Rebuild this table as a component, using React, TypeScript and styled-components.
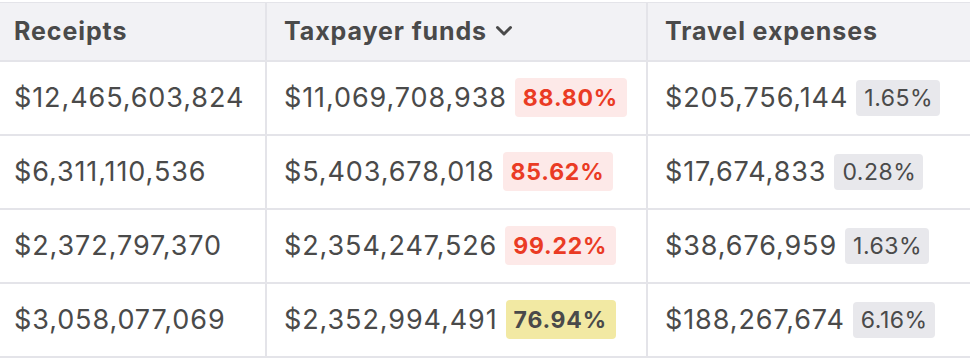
import React from "react";
import styled, { createGlobalStyle } from "styled-components";

const GlobalStyle = createGlobalStyle`
  html, body {
    margin: 0;
    padding: 0;
    background: #fff;
    overflow: hidden;
  }
  body {
    font-family: Inter, Lato, "Liberation Sans", sans-serif;
    color: #4a4a4a;
  }
`;

type Tone = "red" | "yellow" | "gray";

interface Row {
  receipts: string;
  funds: string;
  fundsPct: string;
  fundsTone: Tone;
  travel: string;
  travelPct: string;
}

const rows: Row[] = [
  {
    receipts: "$12,465,603,824",
    funds: "$11,069,708,938",
    fundsPct: "88.80%",
    fundsTone: "red",
    travel: "$205,756,144",
    travelPct: "1.65%",
  },
  {
    receipts: "$6,311,110,536",
    funds: "$5,403,678,018",
    fundsPct: "85.62%",
    fundsTone: "red",
    travel: "$17,674,833",
    travelPct: "0.28%",
  },
  {
    receipts: "$2,372,797,370",
    funds: "$2,354,247,526",
    fundsPct: "99.22%",
    fundsTone: "red",
    travel: "$38,676,959",
    travelPct: "1.63%",
  },
  {
    receipts: "$3,058,077,069",
    funds: "$2,352,994,491",
    fundsPct: "76.94%",
    fundsTone: "yellow",
    travel: "$188,267,674",
    travelPct: "6.16%",
  },
];

const Page = styled.div`
  padding-top: 2px;
  width: 970px;
  overflow: hidden;
`;

const Table = styled.table`
  border-collapse: collapse;
  table-layout: fixed;
  width: 1000px;
  border-top: 1px solid #e4e4e9;
`;

const Th = styled.th<{ $w: number; $first?: boolean }>`
  box-sizing: border-box;
  width: ${(p) => p.$w}px;
  height: 58px;
  padding: 0 0 0 ${(p) => (p.$first ? 14 : 17)}px;
  background: #f2f2f5;
  border-bottom: 2px solid #e4e4e9;
  border-left: ${(p) => (p.$first ? "none" : "2px solid #e4e4e9")};
  text-align: left;
  font-size: 25px;
  font-weight: 700;
  letter-spacing: 0.9px;
  color: #4a4a4a;
  white-space: nowrap;
`;

const Td = styled.td<{ $first?: boolean }>`
  height: 72px;
  padding: 0 0 0 ${(p) => (p.$first ? 14 : 17)}px;
  border-bottom: 2px solid #e4e4e9;
  border-left: ${(p) => (p.$first ? "none" : "2px solid #e4e4e9")};
  font-size: 27px;
  font-weight: 400;
  letter-spacing: 0.9px;
  white-space: nowrap;
`;

const Cell = styled.div`
  display: flex;
  align-items: center;
  gap: 8px;
`;

const HeadLabel = styled.span`
  display: inline-flex;
  align-items: center;
  gap: 8px;
`;

const badgeColors: Record<Tone, { bg: string; fg: string; weight: number }> = {
  red: { bg: "#fde9e8", fg: "#ea3b24", weight: 700 },
  yellow: { bg: "#f2e9a3", fg: "#4a4a4a", weight: 700 },
  gray: { bg: "#e8e8ec", fg: "#4a4a4a", weight: 400 },
};

const Badge = styled.span<{ $tone: Tone }>`
  display: inline-block;
  padding: ${(p) => (p.$tone === "gray" ? "4px 7px 4px 8px" : "6px 9px 5px 8px")};
  border-radius: 4px;
  background: ${(p) => badgeColors[p.$tone].bg};
  color: ${(p) => badgeColors[p.$tone].fg};
  font-weight: ${(p) => badgeColors[p.$tone].weight};
  font-size: 23px;
  letter-spacing: ${(p) => (p.$tone === "gray" ? "0.5px" : "0.8px")};
  line-height: 28px;
`;

const Chevron = () => (
  <svg width="18" height="12" viewBox="0 0 18 12" fill="none">
    <path
      d="M2.5 2.5 L9 9 L15.5 2.5"
      stroke="#4a4a4a"
      strokeWidth="3"
      strokeLinecap="round"
      strokeLinejoin="round"
    />
  </svg>
);

export default function App() {
  return (
    <Page>
      <GlobalStyle />
      <Table>
        <thead>
          <tr>
            <Th $w={266} $first>
              Receipts
            </Th>
            <Th $w={381}>
              <HeadLabel>
                Taxpayer funds <Chevron />
              </HeadLabel>
            </Th>
            <Th $w={353}>Travel expenses</Th>
          </tr>
        </thead>
        <tbody>
          {rows.map((r, i) => (
            <tr key={i}>
              <Td $first>{r.receipts}</Td>
              <Td>
                <Cell>
                  {r.funds}
                  <Badge $tone={r.fundsTone}>{r.fundsPct}</Badge>
                </Cell>
              </Td>
              <Td>
                <Cell>
                  {r.travel}
                  <Badge $tone="gray">{r.travelPct}</Badge>
                </Cell>
              </Td>
            </tr>
          ))}
        </tbody>
      </Table>
    </Page>
  );
}
